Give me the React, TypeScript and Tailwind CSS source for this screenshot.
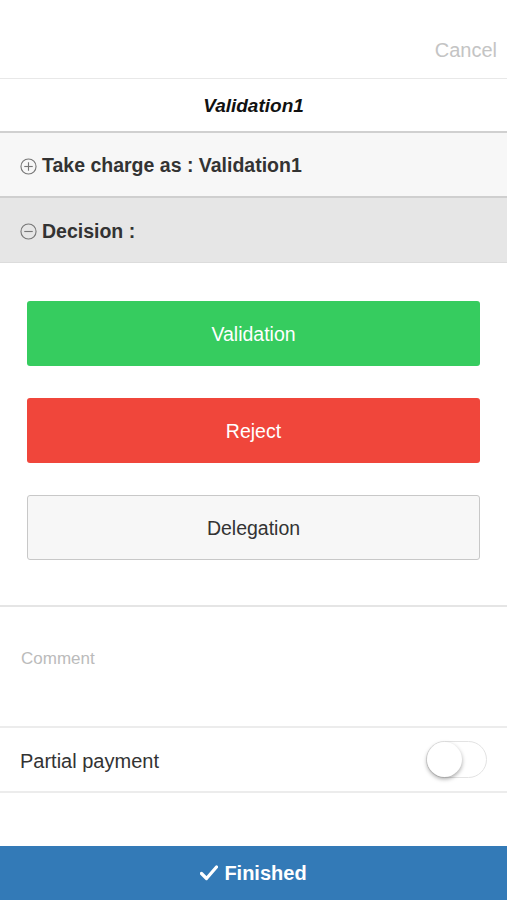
import { useState } from 'react';

const font = { fontFamily: '"Liberation Sans", Arial, sans-serif' };

function PlusCircle({ minus = false }: { minus?: boolean }) {
  return (
    <svg width="17" height="17" viewBox="0 0 18 18" className="shrink-0">
      <circle cx="9" cy="9" r="8" fill="none" stroke="#777" strokeWidth="1.2" />
      <line x1="4.5" y1="9" x2="13.5" y2="9" stroke="#777" strokeWidth="1.2" />
      {!minus && <line x1="9" y1="4.5" x2="9" y2="13.5" stroke="#777" strokeWidth="1.2" />}
    </svg>
  );
}

export default function App() {
  const [partial, setPartial] = useState(false);

  return (
    <div className="w-[507px] h-[900px] bg-white flex flex-col text-[#333]" style={font}>
      <div className="h-[79px] flex items-end justify-end px-[10px] pb-[13px] border-b border-[#e8e8e8]">
        <span className="text-[20px] text-[#c4c4c4]">Cancel</span>
      </div>

      <div className="h-[54px] flex items-center justify-center border-b-2 border-[#d0d0d0] pt-[2px]">
        <span className="text-[19px] italic font-bold text-[#111]">Validation1</span>
      </div>

      <div className="h-[65px] bg-[#f7f7f7] flex items-center gap-[5px] px-[20px] pt-[3px] border-b-2 border-[#cfcfcf]">
        <PlusCircle />
        <span className="text-[19.5px] font-bold">Take charge as : Validation1</span>
      </div>

      <div className="h-[65px] bg-[#e6e6e6] flex items-center gap-[5px] px-[20px] pt-[3px] border-b border-[#dcdcdc]">
        <PlusCircle minus />
        <span className="text-[19.5px] font-bold">Decision :</span>
      </div>

      <div className="flex flex-col gap-[32px] px-[27px] pt-[38px] pb-[45px] border-b-2 border-[#e5e5e5]">
        <button className="h-[65px] w-full rounded-[3px] bg-[#36cc5f] text-white text-[19.5px] pt-[3px]">Validation</button>
        <button className="h-[65px] w-full rounded-[3px] bg-[#f0463b] text-white text-[19.5px] pt-[3px]">Reject</button>
        <button className="h-[65px] w-full rounded-[3px] bg-[#f7f7f7] border border-[#c8c8c8] text-[#333] text-[19.5px] pt-[3px]">
          Delegation
        </button>
      </div>

      <div className="h-[121px] px-[21px] pt-[39px] border-b-2 border-[#ececec]">
        <span className="text-[17px] text-[#bbbbbb]">Comment</span>
      </div>

      <div className="h-[65px] flex items-center justify-between px-[20px] pt-[3px] border-b-2 border-[#ececec]">
        <span className="text-[20px] text-[#333]">Partial payment</span>
        <button
          onClick={() => setPartial(!partial)}
          className="relative w-[61px] h-[37px] rounded-full border border-[#e3e3e3] bg-white -mt-[3px]"
        >
          <span className="absolute left-0 top-0 w-[35px] h-[35px] rounded-full bg-white shadow-[0_2px_4px_rgba(0,0,0,0.35)]" />
        </button>
      </div>

      <div className="flex-1" />

      <div className="h-[54px] bg-[#337ab7] flex items-center justify-center gap-[6px] text-white">
        <svg width="18" height="16" viewBox="0 0 18 16">
          <path d="M1.5 8.5 L6.5 13.5 L16.5 2" fill="none" stroke="white" strokeWidth="3.2" strokeLinecap="round" strokeLinejoin="round" />
        </svg>
        <span className="text-[20px] font-bold">Finished</span>
      </div>
    </div>
  );
}
